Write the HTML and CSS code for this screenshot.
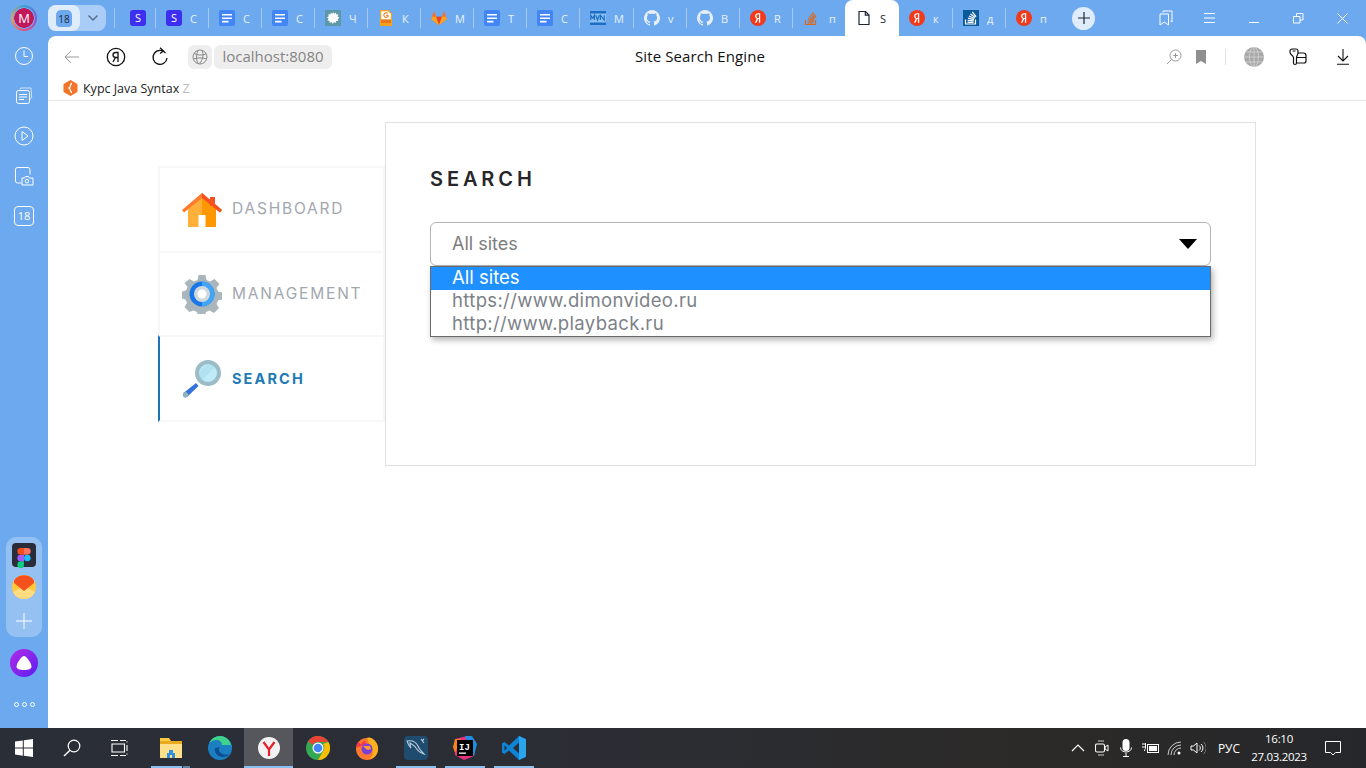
FILE: index.html
```html
<!DOCTYPE html>
<html lang="en">
<head>
  <meta charset="UTF-8" />
  <title>Site Search Engine</title>
  <link rel="stylesheet" href="styles.css">
</head>
<body>
  <svg class="defs" width="0" height="0">
    <symbol id="doc" viewBox="0 0 16 16">
      <rect width="16" height="16" rx="2" fill="#4285f4"/>
      <path d="M3 4h10v1.600H3zM3 7.400h10V9H3zM3 10.800h6.500v1.600H3z" fill="#fff"/>
    </symbol>
    <symbol id="ya" viewBox="0 0 16 16">
      <circle cx="8" cy="8" r="8" fill="#f13a1c"/>
      <path d="M10.200 3.300H8.100C6.300 3.300 5.100 4.500 5.100 6.100c0 1.300.6 2.100 1.700 2.700L4.900 12.700h1.500L8.200 9h.7v3.700h1.300zM8.900 8H8.300C7.100 8 6.500 7.300 6.500 6.200 6.500 5 7.200 4.300 8.300 4.300h.6z" fill="#fff"/>
    </symbol>
    <symbol id="gh" viewBox="0 0 16 16">
      <path fill="#e8eef6" d="M8 0a8 8 0 0 0-2.500 15.600c.4.100.5-.2.500-.4v-1.400c-2.200.5-2.700-1-2.700-1-.4-.9-.9-1.200-.9-1.200-.7-.5.100-.5.100-.5.800.1 1.200.8 1.200.8.700 1.200 1.900.9 2.300.7.100-.5.300-.9.500-1.100-1.800-.2-3.600-.9-3.600-4 0-.9.300-1.600.8-2.100-.1-.2-.4-1 .1-2.100 0 0 .7-.2 2.200.8a7.500 7.500 0 0 1 4 0c1.500-1 2.200-.8 2.200-.8.500 1.100.2 1.900.1 2.100.5.500.8 1.200.8 2.100 0 3.100-1.900 3.800-3.700 4 .3.300.6.800.6 1.500v2.200c0 .2.100.5.500.4A8 8 0 0 0 8 0z"/>
    </symbol>
    <symbol id="so" viewBox="0 0 16 16">
      <path d="M2.500 10v4.500h10V10" fill="none" stroke="currentColor" stroke-width="1.200"/>
      <path d="M4.500 12.800h6M4.600 10.800l6 .5M5 8.700l5.900 1.400M6 6.500l5.400 2.500M7.400 4.400l4.900 3.500M9.300 2.500l3.800 4.700" fill="none" stroke="currentColor" stroke-width="1.200"/>
    </symbol>
  </svg>

  <div class="screen">
    <div class="tabstrip">
      <div class="avatar-cell"><span class="avatar">M</span></div>
      <div class="tabgroup">
        <span class="tabgroup-main"><span class="tabgroup-badge">18</span></span>
        <span class="tabgroup-arrow">
          <svg width="12" height="8" viewBox="0 0 12 8"><path d="M1.500 1.500 6 6l4.500-4.500" fill="none" stroke="#5a6f8c" stroke-width="1.500"/></svg>
        </span>
      </div>
      <div class="tabs">
        <div class="tab tab-first"><span class="ico-s">S</span></div>
        <div class="tab"><span class="ico-s">S</span><span class="tab-text">С</span></div>
        <div class="tab"><svg class="ico"><use href="#doc"/></svg><span class="tab-text">С</span></div>
        <div class="tab"><svg class="ico"><use href="#doc"/></svg><span class="tab-text">С</span></div>
        <div class="tab"><svg class="ico" viewBox="0 0 16 16"><rect width="16" height="16" fill="#5e97a8"/><path d="M8 2l1.200 1.800L11 2.600l.3 2 2.200-.1-.9 2 1.900 1.300-1.900 1.100.9 2.200-2.300-.2-.4 2.200L9 11.900 7.700 14l-1.100-2-2 .9-.1-2.200-2.100-.3 1.200-1.800L2 7.200l1.900-.9-.8-2.100 2.200.4.500-2 1.500 1.500z" fill="#fff"/></svg><span class="tab-text">Ч</span></div>
        <div class="tab"><svg class="ico" viewBox="0 0 16 16"><path d="M2 0h8.500L14 3.500V16H2z" fill="#f6a21e"/><path d="M3.200 1.200h6.800L12.800 4v8H3.200z" fill="#fff"/><path d="M9.800 3.500A2.300 2.300 0 1 0 10 6.500V5.200H8" fill="none" stroke="#e8791a" stroke-width="1.100"/><rect x="3" y="9.300" width="10" height="3.700" fill="#e8791a"/></svg><span class="tab-text">К</span></div>
        <div class="tab"><svg class="ico" viewBox="0 0 16 16"><path d="M8 15 .3 9.400 1 6.800 3 .8l2 6h6l2-6 2 6 .7 2.600z" fill="#fc6d26"/><path d="M8 15 5 6.800h6z" fill="#e24329"/><path d="M8 15 .3 9.400 1 6.800h4zM8 15l7.700-5.600L15 6.800h-4z" fill="#fca326"/></svg><span class="tab-text">М</span></div>
        <div class="tab"><svg class="ico"><use href="#doc"/></svg><span class="tab-text">Т</span></div>
        <div class="tab"><svg class="ico"><use href="#doc"/></svg><span class="tab-text">С</span></div>
        <div class="tab tab-wide"><svg class="ico" viewBox="0 0 16 16"><rect y="1" width="16" height="14" fill="#8cc0f2"/><path d="M0 1h16v2.500H0zM0 12.500h16V15H0z" fill="#1c6fc4"/><path d="M.8 10V5.200l1.800 3 1.800-3V10M5.700 5.200 7.500 10l1.800-4.800M10.400 10V5.200l3.800 4.800V5.200" fill="none" stroke="#1c6fc4" stroke-width="1.200"/></svg><span class="tab-text">М</span></div>
        <div class="tab"><svg class="ico"><use href="#gh"/></svg><span class="tab-text">v</span></div>
        <div class="tab"><svg class="ico"><use href="#gh"/></svg><span class="tab-text">В</span></div>
        <div class="tab"><svg class="ico"><use href="#ya"/></svg><span class="tab-text">R</span></div>
        <div class="tab tab-so"><svg class="ico"><use href="#so"/></svg><span class="tab-text">п</span></div>
        <div class="tab tab-active">
          <svg class="ico" viewBox="0 0 16 16"><path d="M3 1.500h6.500L13 5v9.500H3zM9.300 1.500V5.200H13" fill="none" stroke="#1d2733" stroke-width="1.200"/></svg>
          <span class="tab-text">S</span>
        </div>
        <div class="tab tab-after"><svg class="ico"><use href="#ya"/></svg><span class="tab-text">к</span></div>
        <div class="tab"><svg class="ico ico-so" viewBox="0 0 16 16"><rect width="16" height="16" fill="#0b5a9a"/><g transform="translate(0 -.5)" color="#fff"><use href="#so" width="16" height="16"/></g></svg><span class="tab-text">д</span></div>
        <div class="tab"><svg class="ico"><use href="#ya"/></svg><span class="tab-text">п</span></div>
      </div>
      <button class="newtab">
        <svg width="14" height="14" viewBox="0 0 14 14"><path d="M7 1v12M1 7h12" stroke="#1d2733" stroke-width="1.200"/></svg>
      </button>
      <div class="winctl">
        <span class="winbtn"><svg width="14" height="16" viewBox="0 0 14 16"><path d="M4 2.500V1h9v11l-1.500-1M1 4h8.500v11L5.200 12 1 15z" fill="none" stroke="#fff" stroke-width="1"/></svg></span>
        <span class="winbtn"><svg width="12" height="10" viewBox="0 0 12 10"><path d="M0 .5h11M0 5h11M0 9.500h11" stroke="#fff" stroke-width="1"/></svg></span>
        <span class="winbtn"><svg width="11" height="10" viewBox="0 0 11 10"><path d="M0 9.500h10" stroke="#fff" stroke-width="1"/></svg></span>
        <span class="winbtn"><svg width="11" height="11" viewBox="0 0 11 11"><path d="M.5 3.500h6.500V10H.5zM3.500 3.500V.5H10V7H7" fill="none" stroke="#fff" stroke-width="1"/></svg></span>
        <span class="winbtn"><svg width="11" height="11" viewBox="0 0 11 11"><path d="M.5.500l10 10M10.500.5l-10 10" stroke="#fff" stroke-width="1"/></svg></span>
      </div>
    </div>

    <div class="workspace">
      <aside class="sidebar">
        <div class="side-top">
          <svg class="side-ico" viewBox="0 0 20 20"><circle cx="10" cy="10" r="8.500" fill="none" stroke="#fff" stroke-width="1"/><path d="M10 4.500V10.500H14" fill="none" stroke="#fff" stroke-width="1"/></svg>
          <svg class="side-ico" viewBox="0 0 20 20"><path d="M6 3.500 6.500 2H17l.7 10-1.700 1.500" fill="none" stroke="#cfe2f9" stroke-width="1"/><rect x="2.500" y="4.500" width="13" height="13" rx="2" fill="none" stroke="#fff" stroke-width="1"/><path d="M5 8.500h8M5 11h8M5 13.500h5" stroke="#fff" stroke-width="1"/></svg>
          <svg class="side-ico" viewBox="0 0 20 20"><circle cx="10" cy="10" r="9" fill="none" stroke="#fff" stroke-width="1"/><path d="M8 5.500 14 10l-6 4.500z" fill="none" stroke="#fff" stroke-width="1"/></svg>
          <svg class="side-ico" viewBox="0 0 20 20"><path d="M7.500 17H3.500a2 2 0 0 1-2-2V3.500a2 2 0 0 1 2-2H14a2 2 0 0 1 2 2v5" fill="none" stroke="#fff" stroke-width="1"/><path d="M8 12h2.500l1-1.500h2.800l1 1.500H19v7H8z" fill="none" stroke="#fff" stroke-width="1"/><circle cx="13" cy="15.200" r="1.800" fill="none" stroke="#fff" stroke-width="1"/></svg>
          <span class="side-badge">18</span>
        </div>
        <div class="side-bottom">
          <div class="side-pill">
            <span class="figma">
              <svg width="14" height="20" viewBox="0 0 14 21"><circle cx="10.500" cy="10.500" r="3.500" fill="#1abcfe"/><path d="M3.500 21a3.500 3.500 0 0 0 3.500-3.500V14H3.500a3.500 3.500 0 0 0 0 7z" fill="#0acf83"/><path d="M0 10.500A3.500 3.500 0 0 1 3.500 7H7v7H3.500A3.500 3.500 0 0 1 0 10.500z" fill="#a259ff"/><path d="M0 3.500A3.500 3.500 0 0 1 3.500 0H7v7H3.500A3.500 3.500 0 0 1 0 3.500z" fill="#f24e1e"/><path d="M7 0h3.500a3.500 3.500 0 0 1 0 7H7z" fill="#ff7262"/></svg>
            </span>
            <svg width="24" height="24" viewBox="0 0 24 24"><circle cx="12" cy="12" r="12" fill="#ffc83d"/><path d="M12 24a12 12 0 0 1-11-7l11-6 11 6a12 12 0 0 1-11 7z" fill="#ffdc80"/><path d="M2 5.500A12 12 0 0 1 22 5.500V8l-10 8L2 8z" fill="#f4511e"/></svg>
            <svg width="16" height="16" viewBox="0 0 16 16"><path d="M8 0v16M0 8h16" stroke="#fff" stroke-width="1"/></svg>
          </div>
          <span class="alice"><svg width="16" height="14" viewBox="0 0 16 14"><path d="M8 0c2.500 0 7.500 7.500 7.500 10.500 0 2.500-3 3.500-7.500 3.500S.5 13 .5 10.500C.5 7.500 5.500 0 8 0z" fill="#fff"/></svg></span>
          <span class="dots"><i></i><i></i><i></i></span>
        </div>
      </aside>

      <main class="window">
        <div class="toolbar">
          <div class="nav-row">
            <span class="tool"><svg width="16" height="14" viewBox="0 0 16 14"><path d="M15 7H1M7 1 1 7l6 6" fill="none" stroke="#9a9a9a" stroke-width="1"/></svg></span>
            <span class="tool"><svg width="20" height="20" viewBox="0 0 20 20"><circle cx="10" cy="10" r="8.700" fill="none" stroke="#111" stroke-width="1.300"/><path d="M12 15V5.500H9.700C8 5.500 7 6.500 7 8s1 2.400 2.500 2.500h2.300M9.500 10.500 7 15" fill="none" stroke="#111" stroke-width="1.300"/></svg></span>
            <span class="tool"><svg width="18" height="19" viewBox="0 0 18 19"><path d="M14.500 6A7 7 0 1 0 16 11M9 .8 12.500 3.900 9 6.500" fill="none" stroke="#111" stroke-width="1.300"/></svg></span>
            <span class="globe-pill"><svg width="16" height="16" viewBox="0 0 16 16"><g fill="none" stroke="#888" stroke-width="1"><circle cx="8" cy="8" r="7"/><path d="M2 4.500c4 2 8 2 12 .5M1.500 10c4-1.500 9-1.500 13 0M6 1.500c-2 4-2 9 0 13M10 1.500c2 4 1 9-2.500 13"/></g></svg></span>
            <span class="url">localhost:8080</span>
            <span class="page-title">Site Search Engine</span>
            <div class="tools-right">
              <span class="tool-zoom"><svg width="16" height="16" viewBox="0 0 16 16"><g fill="none" stroke="#999" stroke-width="1"><circle cx="9.500" cy="6.500" r="5.500"/><path d="M9.500 4v5M7 6.500h5M5.500 10.500 1 15"/></g></svg></span>
              <span class="tool-mark"><svg width="10" height="14" viewBox="0 0 10 14"><path d="M0 0h10v14L5 11 0 14z" fill="#8f8f8f"/></svg></span>
              <span class="tool-sep"></span>
              <span class="tool-globe"><svg width="20" height="20" viewBox="0 0 20 20"><circle cx="10" cy="10" r="10" fill="#a8a8a8"/><g fill="none" stroke="#d5d5d5" stroke-width=".8"><ellipse cx="10" cy="10" rx="4.500" ry="10"/><path d="M10 0v20M0 10h20M1.500 5h17M1.500 15h17"/></g></svg></span>
              <span class="tool-ext"><svg width="18" height="18" viewBox="0 0 18 18"><path d="M1 3a2 2 0 0 1 2-2h4a2 2 0 0 1 2 2v2c0 2-1.500 2.500-1.500 4.500V15a1.500 1.500 0 0 1-3 0V9.500C4.500 7.500 1 7 1 4.500zM3.500 3h3M9 5h5.500A2.500 2.500 0 0 1 17 7.500V13a2 2 0 0 1-2 2H8M8 9.500h9" fill="none" stroke="#111" stroke-width="1.200"/></svg></span>
              <span class="tool-down"><svg width="14" height="16" viewBox="0 0 14 16"><path d="M7 0v12M2 7l5 5 5-5M1 15.300h12" fill="none" stroke="#111" stroke-width="1.100"/></svg></span>
            </div>
          </div>
          <div class="bookmarks">
            <svg width="15" height="16" viewBox="0 0 15 16"><path d="M7.500 0 14.500 4v8l-7 4-7-4V4z" fill="#f4752a"/><path d="M9 3.500C7 3.500 8 7 6 8c2 1 1 4.500 3 4.500" fill="none" stroke="#fff" stroke-width="1.300"/></svg>
            <span class="bookmark-text">Курс Java Syntax <span class="bookmark-fade">Z</span></span>
          </div>
        </div>

        <div class="page">
          <div class="content">
            <nav class="menu">
              <a class="menu-item">
                <svg class="menu-ico" viewBox="0 -3 40 40"><path d="M6 17 20 4l14 13v18H6z" fill="#ffb03b"/><path d="M20 4l14 13v18H20z" fill="#ff9800"/><rect x="16.500" y="23" width="7" height="12" fill="#fff"/><rect x="28" y="5" width="5" height="9" fill="#f4511e"/><path d="M20 1 0 18l2 2.500L20 6l18 14.500 2-2.500z" fill="#ff7a2e"/><path d="M20 1v5l18 14.500 2-2.500z" fill="#f4511e"/></svg>
                <span>DASHBOARD</span>
              </a>
              <a class="menu-item">
                <svg class="menu-ico" viewBox="0 0 40 40"><path d="M16.500 1h7l1 5 3.500 1.500L32.500 5l5 5-3 4 1.500 3.500 4 1v7l-4 1-1.500 3.500 2.500 4-5 5-4.500-2.500-3.500 1.500-1 4h-7l-1-4-3.500-1.500L7.500 38l-5-5 2.500-4L3.500 25.500l-3.500-1v-7l4-1L5.500 13l-3-4 5-4 4.500 2.500L15.500 6z" fill="#a9b6bb"/><circle cx="20" cy="20" r="12.500" fill="#1976e8"/><path d="M20 7.500a12.500 12.500 0 0 1 0 25z" fill="#42a5f5"/><circle cx="20" cy="20" r="8" fill="#cfd8dc"/><circle cx="20" cy="20" r="4.500" fill="#fff"/></svg>
                <span>MANAGEMENT</span>
              </a>
              <a class="menu-item menu-item-active">
                <svg class="menu-ico" viewBox="0 -1 40 40"><path d="M14 23 1.500 33a2.700 2.700 0 0 0 3.500 4l11.500-11z" fill="#3572e0"/><path d="M1.500 33a2.700 2.700 0 0 0 3.500 4L7 35l-3.500-3.800z" fill="#90b4bd"/><circle cx="26" cy="13" r="11" fill="#bfeaf7"/><path d="M34 6 19 21a11 11 0 0 1 15-15z" fill="#a4d9ec" opacity=".5"/><circle cx="26" cy="13" r="11" fill="none" stroke="#9cbcc8" stroke-width="4"/></svg>
                <span>SEARCH</span>
              </a>
            </nav>
            <section class="panel">
              <h2 class="panel-title">SEARCH</h2>
              <div class="select">
                <div class="select-box">
                  <span>All sites</span>
                  <svg width="18" height="10" viewBox="0 0 18 10"><path d="M0 0h18L9 10z" fill="#000"/></svg>
                </div>
                <ul class="select-list">
                  <li class="select-option select-option-on">All sites</li>
                  <li class="select-option">https://www.dimonvideo.ru</li>
                  <li class="select-option">http://www.playback.ru</li>
                </ul>
              </div>
            </section>
          </div>
        </div>
      </main>
    </div>

    <footer class="taskbar">
      <div class="task-left">
        <span class="task-btn"><svg width="18" height="18" viewBox="0 0 18 18"><path d="M0 2.500 7.800 1.400v7.200H0zM8.800 1.200 18 0v8.600H8.800zM0 9.600h7.800v7.100L0 15.600zM8.800 9.600H18V18l-9.200-1.300z" fill="#fff"/></svg></span>
        <span class="task-btn"><svg width="18" height="18" viewBox="0 0 18 18"><circle cx="11" cy="7" r="5.800" fill="none" stroke="#fff" stroke-width="1.200"/><path d="M7 11.200 1 17" stroke="#fff" stroke-width="1.500"/></svg></span>
        <span class="task-btn"><svg width="18" height="16" viewBox="0 0 18 16"><path d="M0 .5h7M9 .5h6M0 15.500h7M9 15.500h6M1 4h12.500v8H1zM16 1.500v1M16 5v6M16 13.500v1" fill="none" stroke="#fff" stroke-width="1.100"/></svg></span>
        <span class="task-app task-folder"><svg width="24" height="22" viewBox="0 0 24 22"><path d="M1 1h9l2 3h11v17H1z" fill="#ffc83d"/><path d="M1 7h22v14H1z" fill="#ffe08a"/><path d="M1 4h22v3H1z" fill="#e8a91f"/><path d="M8 21v-5h2v-3h4v3h2v5h-3v-3h-2v3z" fill="#2f8fe0"/></svg></span>
        <span class="task-app"><svg width="24" height="24" viewBox="0 0 24 24"><circle cx="12" cy="12" r="12" fill="#1c7fc4"/><path d="M23.500 14c.8-6-3.500-14-11.500-14C7 0 3 3 1.500 7c3-3 8-4 11-1.500 1.500 1.200 1.800 3 .8 3.500h10.200z" fill="#3fd28b"/><path d="M7 12c-1 5 3 9 8 9 3 0 5-1 7-3-3 1-7 1-9-1-2-1.500-3-3.500-1-6z" fill="#0c4f91"/></svg></span>
        <span class="task-app task-app-on"><svg width="22" height="22" viewBox="0 0 22 22"><circle cx="11" cy="11" r="11" fill="#f2f2f2"/><path d="M5.500 5 11 12.500V19M16.500 5 11 12.500" fill="none" stroke="#e5202a" stroke-width="2.200"/></svg></span>
        <span class="task-app"><svg width="24" height="24" viewBox="0 0 24 24"><circle cx="12" cy="12" r="12" fill="#34a853"/><path d="M12 0a12 12 0 0 1 10.400 6H12a6 6 0 0 0-5.200 3L2.100 5.200A12 12 0 0 1 12 0z" fill="#ea4335"/><path d="M22.400 6A12 12 0 0 1 12 24l5.200-9A6 6 0 0 0 17 8z" fill="#fbbc05"/><circle cx="12" cy="12" r="5.500" fill="#fff"/><circle cx="12" cy="12" r="4.300" fill="#4285f4"/></svg></span>
        <span class="task-app"><svg width="24" height="24" viewBox="0 0 24 24"><circle cx="12" cy="13" r="11" fill="#ff7a2e"/><path d="M12 2c4-2 10 3 11 9 1 7-4 12-9 12 5-3 5-10 1-13-1-3-2-5-3-8z" fill="#ffb01f"/><path d="M1 12c0-3 1-5 3-7 0 2 1 3 2 3 1-2 3-3 5-3-2 3 3 4 4 4-5 1-9 0-14 3z" fill="#f03a50"/><circle cx="12" cy="13" r="5.500" fill="#7b3fd6"/><path d="M8 10h7l1 3-3 1-2-1z" fill="#ff9a2e"/></svg></span>
        <span class="task-app task-app-run"><svg width="24" height="24" viewBox="0 0 24 24"><rect width="24" height="24" rx="4" fill="#1f4b6e"/><path d="M3 5c5-1 9 1 11 5 1 3 3 5 6 8-4-1-6-3-8-6-1-3-4-3-6-5 0 2 0 3 1 5-2-2-3-4-4-7zM17 3l3 4M20 3l-2 2" fill="none" stroke="#b9cedb" stroke-width="1.100"/></svg></span>
        <span class="task-app task-app-run"><svg width="24" height="24" viewBox="0 0 24 24"><path d="M2 3 14 0l9 6-2 14-10 4-9-5z" fill="#ed2f80"/><path d="M12 0h7l5 8-3 12-5-6z" fill="#1d8fe1"/><path d="M2 3l6 0-6 14-2-6z" fill="#fc801d"/><rect x="4" y="4" width="16" height="16" fill="#000"/><rect x="6" y="16.500" width="7" height="1.300" fill="#fff"/><text class="ij-text" x="6" y="13.500">IJ</text></svg></span>
        <span class="task-app task-app-run"><svg width="24" height="24" viewBox="0 0 24 24"><path d="M17 0 24 3.200v17.600L17 24 7 14.500 2.500 18 0 16.700V7.300L2.500 6 7 9.500z" fill="#0e84d4"/><path d="M17 0 24 3.200v17.600L17 24z" fill="#29a5ee"/><path d="M17 6.500 11 12l6 5.500zM2.500 9.300v5.400L5 12z" fill="#2a2d35"/></svg></span>
      </div>
      <div class="tray">
        <span class="tray-ico"><svg width="14" height="8" viewBox="0 0 14 8"><path d="M1 7 7 1l6 6" fill="none" stroke="#fff" stroke-width="1.200"/></svg></span>
        <span class="tray-ico"><svg width="14" height="16" viewBox="0 0 14 16"><path d="M3 1h6M3 15h6" stroke="#ccc" stroke-width="1"/><rect x=".5" y="4" width="9" height="8" rx="1.500" fill="none" stroke="#fff" stroke-width="1.100"/><path d="M10 7l3-2v6l-3-2z" fill="none" stroke="#fff" stroke-width="1"/></svg></span>
        <span class="tray-ico"><svg width="12" height="18" viewBox="0 0 12 18"><rect x="2.500" width="7" height="12" rx="3.500" fill="#fff"/><path d="M.5 8.500c0 6 11 6 11 0M6 14v3.500M3 17.500h6" fill="none" stroke="#fff" stroke-width="1"/></svg></span>
        <span class="tray-ico"><svg width="17" height="12" viewBox="0 0 17 12"><rect x="5.500" y="2.500" width="11" height="8" fill="none" stroke="#fff" stroke-width="1"/><rect x="7" y="4" width="8" height="5" fill="#fff"/><path d="M0 2h3M0 5h3M3.500 1v5c0 1-1 1.500-1 3" fill="none" stroke="#fff" stroke-width="1"/></svg></span>
        <span class="tray-ico"><svg width="14" height="14" viewBox="0 0 14 14"><path d="M1 14A13 13 0 0 1 14 1M4 14A10 10 0 0 1 14 4M7 14a7 7 0 0 1 7-7" fill="none" stroke="#ccc" stroke-width="1"/><circle cx="12" cy="12" r="1.500" fill="#fff"/></svg></span>
        <span class="tray-ico"><svg width="16" height="14" viewBox="0 0 16 14"><path d="M1 5h2.500L7 2v10L3.500 9H1zM9 4.500a3 3 0 0 1 0 5M11 3a5 5 0 0 1 0 8" fill="none" stroke="#fff" stroke-width="1"/><path d="M13.500 1a8 8 0 0 1 0 12" fill="none" stroke="#777" stroke-width="1"/></svg></span>
        <span class="tray-lang">РУС</span>
        <span class="tray-clock"><span>16:10</span><span>27.03.2023</span></span>
        <span class="tray-note"><svg width="16" height="15" viewBox="0 0 16 15"><path d="M.5.500h15v11h-5L8 14 5.500 11.500h-5z" fill="none" stroke="#fff" stroke-width="1"/></svg></span>
      </div>
    </footer>
  </div>
</body>
</html>
```

FILE: styles.css
```css
* {
  box-sizing: border-box;
}

body {
  margin: 0;
  font-family: "Open Sans", "Noto Sans", sans-serif;
  background: #6da9ee;
}

.defs {
  display: block;
  height: 0;
}

.screen {
  display: flex;
  flex-direction: column;
  width: 1366px;
  height: 768px;
  overflow: hidden;
  background: #6da9ee;
}

/* tab strip */
.tabstrip {
  display: flex;
  align-items: center;
  height: 36px;
  flex: none;
  color: #fff;
}

.avatar-cell {
  width: 48px;
  flex: none;
  display: flex;
  justify-content: center;
}

.avatar {
  width: 26px;
  height: 26px;
  border-radius: 50%;
  background: radial-gradient(circle, #c2185b 9.500px, #6da9ee 10px, #6da9ee 10.500px, transparent 11px), conic-gradient(#2fa6d8, #8a5bd6, #e0508a, #f0a050, #2fa6d8);
  color: #fff;
  font-size: 13px;
  display: flex;
  align-items: center;
  justify-content: center;
}

.tabgroup {
  display: flex;
  width: 58px;
  height: 26px;
  border-radius: 8px;
  background: #a9cdf6;
  flex: none;
}

.tabgroup-main {
  width: 32px;
  border-radius: 8px;
  background: #dfecfb;
  display: flex;
  align-items: center;
  justify-content: center;
}

.tabgroup-badge {
  width: 16px;
  height: 17px;
  border-radius: 5px 5px 4px 4px;
  background: #6da9ee;
  color: #1d2733;
  font-size: 10px;
  text-align: center;
  line-height: 18px;
}

.tabgroup-arrow {
  flex: 1;
  display: flex;
  align-items: center;
  justify-content: center;
}

.tabs {
  display: flex;
  margin-left: 8px;
  height: 36px;
}

.tab {
  width: 53px;
  height: 36px;
  flex: none;
  display: flex;
  align-items: center;
  gap: 8px;
  padding: 0 0 0 11px;
  position: relative;
  overflow: hidden;
  font-size: 11px;
  color: #eaf3fd;
}

.tab::before {
  content: "";
  position: absolute;
  left: 0;
  top: 8px;
  height: 20px;
  width: 1px;
  background: #a5c9f4;
}

.tab-first {
  width: 41px;
  padding-left: 16px;
}

.tab-wide {
  width: 54px;
}

.tab-so {
  color: #d9691e;
}

.tab-so .tab-text {
  color: #eaf3fd;
  margin-left: 2px;
}

.tab-active {
  width: 54px;
  background: #fff;
  color: #1d2733;
  border-radius: 8px 8px 0 0;
  padding-left: 11px;
}

.tab-active::before,
.tab-after::before {
  display: none;
}

.tab-after {
  padding-left: 10px;
  width: 53px;
}

.ico {
  width: 16px;
  height: 16px;
  flex: none;
}

.ico-s {
  width: 16px;
  height: 16px;
  flex: none;
  border-radius: 3px;
  background: #3d2ff0;
  color: #fff;
  font-size: 11px;
  line-height: 16px;
  text-align: center;
}

.tab-text {
  white-space: nowrap;
}

.newtab {
  width: 23px;
  height: 23px;
  border: none;
  border-radius: 50%;
  padding: 0;
  margin-left: 14px;
  background: #dfecfb;
  display: flex;
  align-items: center;
  justify-content: center;
  flex: none;
}

.winctl {
  display: flex;
  margin-left: auto;
  padding-right: 2px;
}

.winbtn {
  width: 44px;
  height: 36px;
  display: flex;
  align-items: center;
  justify-content: center;
}

/* left panel */
.workspace {
  flex: 1;
  display: flex;
  min-height: 0;
}

.sidebar {
  width: 48px;
  flex: none;
  display: flex;
  flex-direction: column;
  justify-content: space-between;
  align-items: center;
  padding-top: 10px;
  padding-bottom: 21px;
}

.side-top {
  display: flex;
  flex-direction: column;
  align-items: center;
  gap: 20px;
}

.side-ico {
  width: 20px;
  height: 20px;
  display: block;
}

.side-badge {
  width: 20px;
  height: 20px;
  border: 1px solid #fff;
  border-radius: 4px;
  color: #fff;
  font-size: 11px;
  text-align: center;
  line-height: 18px;
}

.side-bottom {
  display: flex;
  flex-direction: column;
  align-items: center;
}

.side-pill {
  width: 36px;
  height: 100px;
  border-radius: 10px;
  background: #94c0f2;
  display: flex;
  flex-direction: column;
  align-items: center;
  padding-top: 6px;
  gap: 8px;
}

.side-pill svg:last-child {
  margin-top: 6px;
}

.figma {
  width: 24px;
  height: 24px;
  border-radius: 4px;
  background: #2b2d38;
  display: flex;
  align-items: center;
  justify-content: center;
}

.alice {
  width: 28px;
  height: 28px;
  margin-top: 12px;
  border-radius: 50%;
  background: linear-gradient(135deg, #b22be8, #5a1ff0);
  display: flex;
  align-items: center;
  justify-content: center;
}

.dots {
  display: flex;
  gap: 3px;
  margin-top: 25px;
}

.dots i {
  width: 5px;
  height: 5px;
  border: 1px solid #fff;
  border-radius: 50%;
}

/* browser window */
.window {
  flex: 1;
  min-width: 0;
  display: flex;
  flex-direction: column;
  background: #fff;
  border-radius: 8px 8px 0 0;
  overflow: hidden;
}

.toolbar {
  height: 65px;
  flex: none;
  border-bottom: 1px solid #e6e6e6;
}

.nav-row {
  display: flex;
  align-items: center;
  height: 40px;
  padding-top: 1px;
  position: relative;
}

.tool {
  width: 44px;
  display: flex;
  justify-content: center;
  flex: none;
}

.tool:first-child {
  margin-left: 2px;
}

.globe-pill {
  width: 24px;
  height: 24px;
  margin-left: 6px;
  border-radius: 6px;
  background: #eee;
  display: flex;
  align-items: center;
  justify-content: center;
  flex: none;
}

.url {
  width: 118px;
  height: 24px;
  margin-left: 2px;
  border-radius: 6px;
  background: #eee;
  color: #848484;
  font-size: 15px;
  line-height: 23px;
  text-align: center;
  flex: none;
}

.page-title {
  position: absolute;
  left: 587px;
  top: 10px;
  color: #111;
  font-size: 15px;
  line-height: 20px;
  letter-spacing: 0.100px;
}

.tools-right {
  display: flex;
  align-items: center;
  margin-left: auto;
  padding-right: 16px;
}

.tool-zoom {
  display: flex;
  margin-right: 14px;
}

.tool-mark {
  display: flex;
  margin-right: 19px;
}

.tool-sep {
  width: 1px;
  height: 16px;
  background: #e2e2e2;
  margin-right: 18px;
}

.tool-globe {
  display: flex;
  margin-right: 25px;
}

.tool-ext {
  display: flex;
  margin-right: 29px;
}

.tool-down {
  display: flex;
}

.bookmarks {
  display: flex;
  align-items: center;
  gap: 5px;
  height: 24px;
  padding-left: 15px;
}

.bookmark-text {
  font-size: 12.500px;
  color: #222;
}

.bookmark-fade {
  color: #bbb;
}

/* page */
.page {
  flex: 1;
  min-height: 0;
  background: #fff;
  padding-top: 21px;
}

.content {
  display: flex;
  width: 1098px;
  margin: 0 auto;
  font-family: Inter, "Open Sans", sans-serif;
}

.menu {
  width: 227px;
  height: 256px;
  flex: none;
  margin-top: 44px;
  display: flex;
  flex-direction: column;
}

.menu-item {
  flex: 1;
  display: flex;
  align-items: center;
  gap: 10px;
  padding-left: 22px;
  border: 2px solid #f7f7f7;
  border-bottom: none;
  color: #a2a7ae;
  font-size: 15.500px;
  letter-spacing: 1.800px;
}

.menu-item span {
  margin-bottom: 2px;
}

.menu-item:last-child {
  border-bottom: 2px solid #f7f7f7;
}

.menu-item-active {
  border-left-color: #1a76b8;
  color: #227ab5;
  font-weight: 700;
  font-size: 14.500px;
  letter-spacing: 2.100px;
}

.menu-item-active span {
  margin-bottom: 0;
}

.menu-ico {
  width: 40px;
  height: 40px;
  flex: none;
}

.panel {
  width: 871px;
  height: 344px;
  flex: none;
  border: 1px solid #e1e1e1;
  padding: 44px 44px 0;
}

.panel-title {
  margin: 0;
  font-size: 20px;
  line-height: 24px;
  font-weight: 600;
  letter-spacing: 3.900px;
  color: #26262b;
}

.select {
  position: relative;
  width: 781px;
  margin-top: 31px;
}

.select-box {
  height: 44px;
  border: 1px solid #b4b4b4;
  border-radius: 6px;
  padding: 0 13px 1px 21px;
  display: flex;
  align-items: center;
  justify-content: space-between;
  color: #7d7d7d;
  font-size: 18px;
}

.select-list {
  position: absolute;
  left: 0;
  right: 0;
  top: 44px;
  margin: 0;
  padding: 0;
  list-style: none;
  background: #fff;
  border: 1px solid #6b6b6b;
  box-shadow: 2px 3px 6px rgba(0, 0, 0, 0.3);
}

.select-option {
  height: 23px;
  padding-left: 21px;
  color: #7d8288;
  font-size: 18.500px;
  letter-spacing: 0.350px;
  line-height: 21px;
}

.select-option-on {
  background: #1e90ff;
  color: #fff;
  letter-spacing: 0;
}

/* windows taskbar */
.taskbar {
  height: 40px;
  flex: none;
  display: flex;
  justify-content: space-between;
  background: linear-gradient(90deg, #2a2e37 0%, #2b2d33 50%, #2c2a28 75%, #26272b 100%);
  color: #fff;
}

.task-left {
  display: flex;
}

.task-btn {
  width: 48px;
  display: flex;
  align-items: center;
  justify-content: center;
}

.task-app {
  width: 49px;
  display: flex;
  align-items: center;
  justify-content: center;
}

.task-folder {
  margin-left: 2px;
  background: linear-gradient(#8ac0ef, #8ac0ef) 5px 100% / 31px 2px no-repeat, linear-gradient(#5f86a8, #5f86a8) 37px 100% / 7px 2px no-repeat;
}

.task-app-run {
  background: linear-gradient(#8ac0ef, #8ac0ef) center bottom / 40px 2px no-repeat;
}

.task-app-on {
  background: linear-gradient(#8ac0ef, #8ac0ef) center bottom / 100% 2px no-repeat, #55575d;
}

.ij-text {
  font-family: "Liberation Mono", monospace;
  font-size: 9px;
  font-weight: 700;
  fill: #fff;
}

.tray {
  display: flex;
  align-items: center;
  padding-right: 11px;
}

.tray-ico {
  width: 24px;
  display: flex;
  justify-content: center;
}

.tray-lang {
  width: 30px;
  margin-left: 4px;
  font-size: 12px;
  text-align: center;
  white-space: nowrap;
}

.tray-clock {
  width: 64px;
  margin-left: 3px;
  display: flex;
  flex-direction: column;
  align-items: center;
  font-size: 11.500px;
  letter-spacing: -0.300px;
  line-height: 18px;
}

.tray-note {
  width: 44px;
  display: flex;
  justify-content: center;
}
```
